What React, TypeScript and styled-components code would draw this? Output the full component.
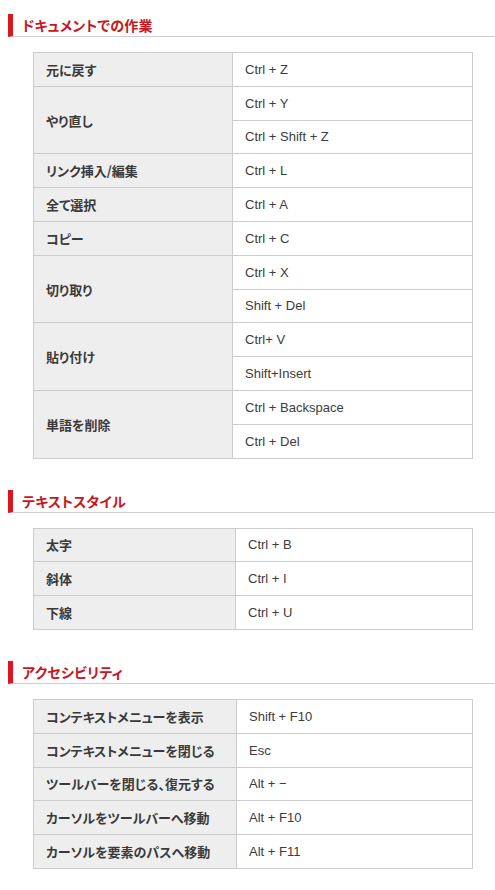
import React from "react";
import styled, { createGlobalStyle } from "styled-components";

const Global = createGlobalStyle`
  html, body { margin: 0; padding: 0; background: #fff; }
  body { font-family: "Noto Sans CJK JP", "Liberation Sans", sans-serif; color: #333; }
`;

const Page = styled.div`
  width: 495px;
  padding: 14px 0 20px 8px;
  box-sizing: border-box;
  overflow: hidden;
`;

const Heading = styled.h2`
  margin: 0;
  height: 23px;
  box-sizing: border-box;
  border-left: 5px solid #e0141e;
  border-bottom: 1px solid #cfcfcf;
  padding-left: 9px;
  margin-right: -20px;
  display: flex;
  align-items: center;
  font-size: 14px;
  font-weight: bold;
  color: #c8161d;
  font-feature-settings: "palt";
  letter-spacing: 0.2px;
  &:not(:first-child) { margin-top: 31px; }
`;

const Table = styled.table`
  margin: 15px 0 0 25px;
  width: 440px;
  border-collapse: collapse;
  table-layout: fixed;
`;

const KeyCell = styled.td<{ $w?: number }>`
  width: ${(p) => (p.$w ?? 199) - 25}px;
  background: #eeeeee;
  border: 1px solid #cccccc;
  padding: 0 12px;
  height: 32.8px;
  font-size: 13px;
  font-weight: bold;
  color: #3a3a3a;
  font-feature-settings: "palt";
  vertical-align: middle;
`;

const ShortcutCell = styled.td`
  border: 1px solid #cccccc;
  padding: 0 12px;
  height: 32.8px;
  font-family: "Liberation Sans", "Noto Sans CJK JP", sans-serif;
  font-size: 13px;
  color: #3c3c3c;
  vertical-align: middle;
`;

type Entry = { label: string; keys: string[] };

const sections: { title: string; w: number; rows: Entry[] }[] = [
  {
    title: "ドキュメントでの作業",
    w: 199,
    rows: [
      { label: "元に戻す", keys: ["Ctrl + Z"] },
      { label: "やり直し", keys: ["Ctrl + Y", "Ctrl + Shift + Z"] },
      { label: "リンク挿入/編集", keys: ["Ctrl + L"] },
      { label: "全て選択", keys: ["Ctrl + A"] },
      { label: "コピー", keys: ["Ctrl + C"] },
      { label: "切り取り", keys: ["Ctrl + X", "Shift + Del"] },
      { label: "貼り付け", keys: ["Ctrl+ V", "Shift+Insert"] },
      { label: "単語を削除", keys: ["Ctrl + Backspace", "Ctrl + Del"] },
    ],
  },
  {
    title: "テキストスタイル",
    w: 202,
    rows: [
      { label: "太字", keys: ["Ctrl + B"] },
      { label: "斜体", keys: ["Ctrl + I"] },
      { label: "下線", keys: ["Ctrl + U"] },
    ],
  },
  {
    title: "アクセシビリティ",
    w: 203,
    rows: [
      { label: "コンテキストメニューを表示", keys: ["Shift + F10"] },
      { label: "コンテキストメニューを閉じる", keys: ["Esc"] },
      { label: "ツールバーを閉じる、復元する", keys: ["Alt + −"] },
      { label: "カーソルをツールバーへ移動", keys: ["Alt + F10"] },
      { label: "カーソルを要素のパスへ移動", keys: ["Alt + F11"] },
    ],
  },
];

export default function App() {
  return (
    <Page>
      <Global />
      {sections.map((s) => (
        <React.Fragment key={s.title}>
          <Heading>{s.title}</Heading>
          <Table>
            <tbody>
              {s.rows.flatMap((r) =>
                r.keys.map((k, i) => (
                  <tr key={r.label + k}>
                    {i === 0 && (
                      <KeyCell $w={s.w} rowSpan={r.keys.length}>
                        {r.label}
                      </KeyCell>
                    )}
                    <ShortcutCell>{k}</ShortcutCell>
                  </tr>
                ))
              )}
            </tbody>
          </Table>
        </React.Fragment>
      ))}
    </Page>
  );
}
